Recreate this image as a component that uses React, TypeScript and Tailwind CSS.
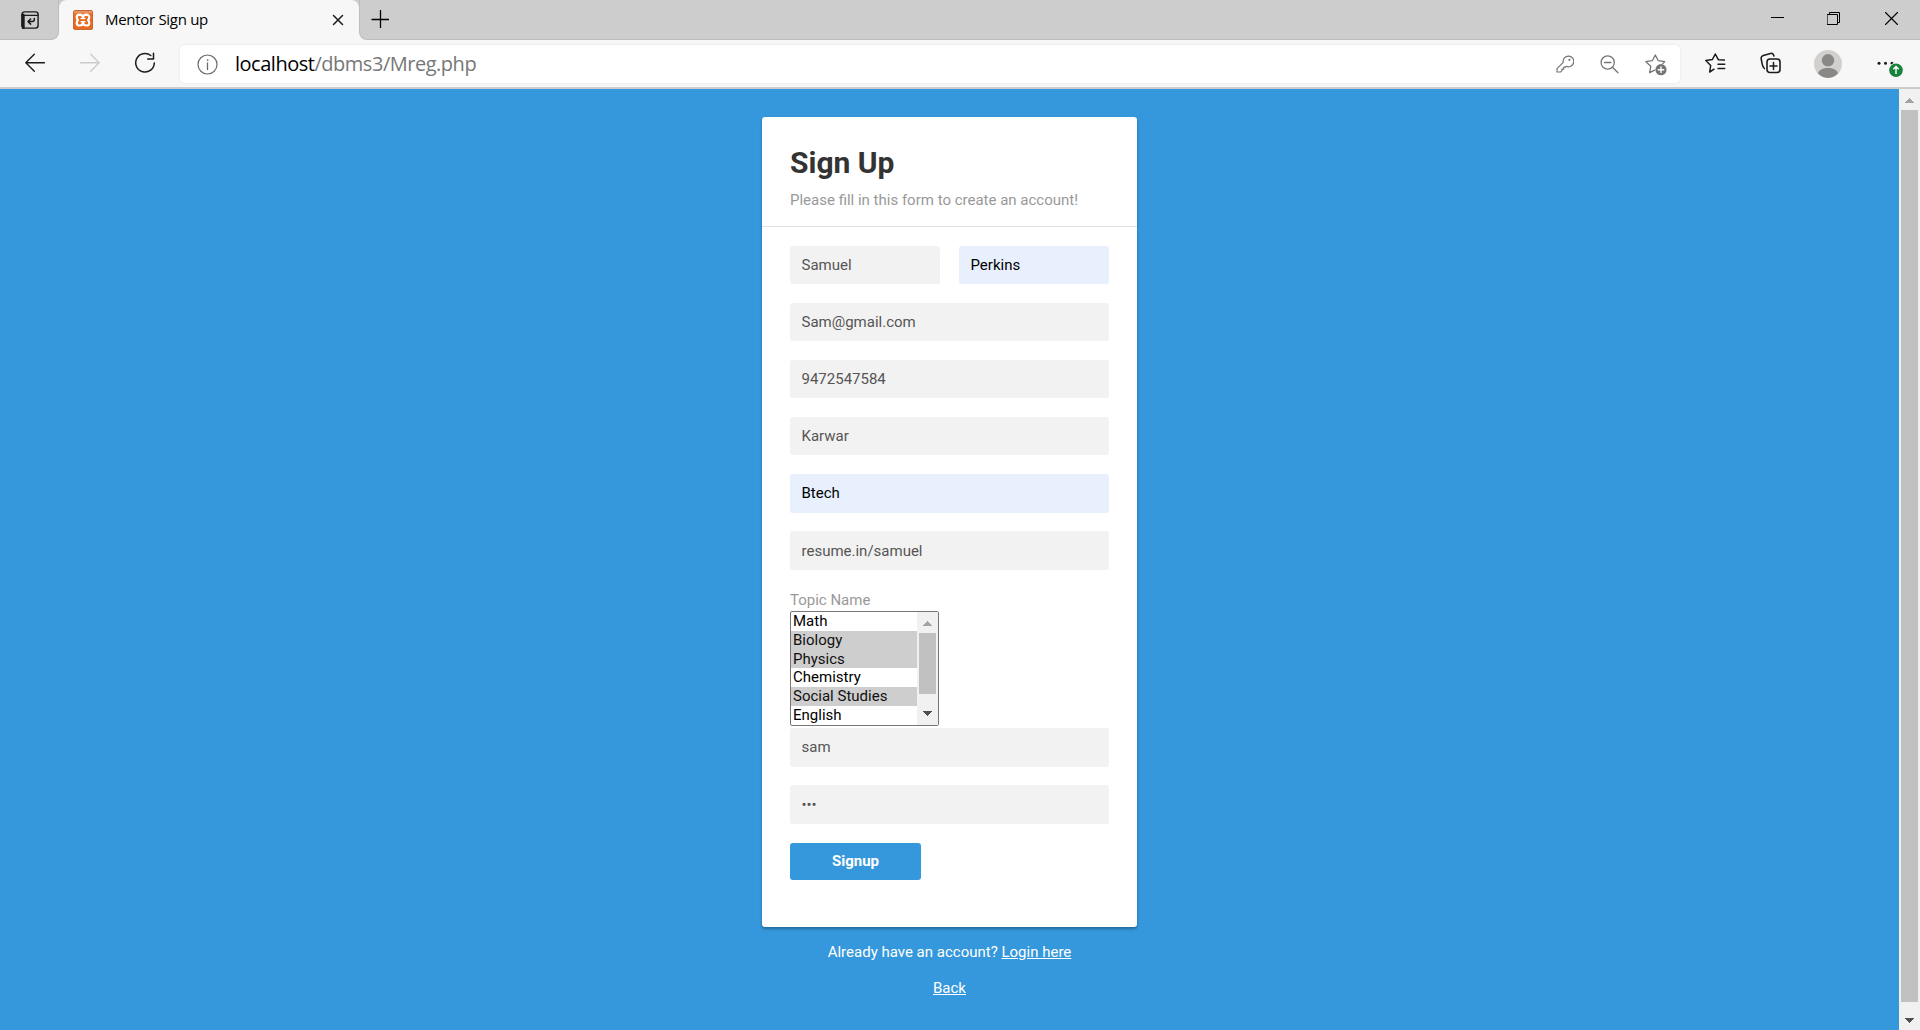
import type { ReactNode } from 'react';

function Icon({ size = 20, children, className = '' }: { size?: number; children: ReactNode; className?: string }) {
  return (
    <svg width={size} height={size} viewBox={`0 0 ${size} ${size}`} fill="none" stroke="currentColor" strokeWidth="1.3" strokeLinecap="round" strokeLinejoin="round" className={`block shrink-0 ${className}`}>
      {children}
    </svg>
  );
}

function TabStrip() {
  return (
    <div className="flex h-10 bg-[#f7f7f7]">
      <div className="w-[59px] rounded-br-lg border-b border-r border-[#bdbdbd] bg-[#cdcdcd] pl-[21px] pt-[11px]">
        <Icon size={18} className="text-[#1b1b1b]">
          <rect x="0.9" y="0.9" width="16.2" height="16.2" rx="2.5" strokeWidth="1.4" />
          <path d="M2.200 4v12.500" strokeWidth="3" />
          <path d="M1 4.300h16" strokeWidth="1.300" />
          <path d="M13.300 7.500v1c0 1.300-.8 2-2 2H7.200M9.600 8L7 10.500l2.600 2.600" strokeWidth="1.500" />
        </Icon>
      </div>
      <div className="w-[300px] bg-[#cdcdcd]">
        <div className="flex h-10 items-center rounded-t-lg bg-[#f7f7f7] pl-3.5 pr-[15px]">
          <svg width="20" height="20" viewBox="0 0 20 20" className="block shrink-0">
            <rect x="0.5" y="0.5" width="19" height="19" rx="1.5" fill="#e9691f" stroke="#c9663a" />
            <path d="M1 1h18v2.500H1z" fill="#e8935f" />
            <path d="M10 7.300C9.700 5.500 8.500 4.700 6.700 4.700C4.900 4.700 3.700 5.900 3.700 7.300C3.700 8.600 4.200 9.400 5 10.100C4.200 10.800 3.700 11.500 3.700 12.900C3.700 14.300 4.900 15.500 6.700 15.500C8.500 15.500 9.700 14.700 10 12.900C10.300 14.700 11.500 15.500 13.300 15.500C15.100 15.500 16.300 14.300 16.300 12.900C16.300 11.500 15.800 10.800 15 10.100C15.800 9.400 16.300 8.600 16.300 7.300C16.300 5.900 15.100 4.700 13.300 4.700C11.500 4.700 10.300 5.500 10 7.300z" fill="none" stroke="#fff" strokeWidth="2.200" strokeLinejoin="round" />
            <path d="M8.200 8.500h3.600M8.200 11.700h3.600" stroke="#fff" strokeWidth="1.600" strokeLinecap="round" />
          </svg>
          <span className="-mt-0.5 ml-3 flex-1 whitespace-nowrap font-['Open_Sans','Noto_Sans',sans-serif] text-[15px] leading-5 tracking-[-0.3px] text-black">Mentor Sign up</span>
          <Icon size={12} className="text-[#1b1b1b]">
            <path d="M1.500 1.500l9 9M10.500 1.500l-9 9" strokeWidth="1.500" />
          </Icon>
        </div>
      </div>
      <div className="flex flex-1 rounded-bl-lg border-b border-l border-[#bdbdbd] bg-[#cdcdcd] pl-3">
        <Icon size={18} className="-ml-px mt-[10px] text-black">
          <path d="M9.500 .5v17M1 9.500h17" strokeWidth="1.300" />
        </Icon>
        <div className="ml-auto flex pr-[22px] pt-3 text-black">
          <Icon size={13} className="mr-[43px]">
            <path d="M0 5.500h13" strokeWidth="1" strokeLinecap="butt" />
          </Icon>
          <Icon size={13} className="mr-[45px]">
            <path d="M.5 2.500h10v10H.5zM2.500 2.500v-2h10v10h-2" strokeWidth="1" strokeLinejoin="miter" />
          </Icon>
          <Icon size={13}>
            <path d="M.5 .5l12 12M12.500 .5l-12 12" strokeWidth="1.100" />
          </Icon>
        </div>
      </div>
    </div>
  );
}

function Toolbar() {
  return (
    <div className="flex h-[49px] items-start border-b-2 border-[#cbcbcb] bg-[#f7f7f7] text-[#1b1b1b]">
      <Icon className="ml-[25px] mt-[13px]">
        <path d="M19.500 9.700H.8M9.300 1.200L.8 9.700l8.500 8.500" strokeWidth="1.400" />
      </Icon>
      <Icon className="ml-[35px] mt-[13px] text-[#cbcbcb]">
        <path d="M.5 9.700h18.700M10.700 1.200l8.500 8.500-8.500 8.500" strokeWidth="1.400" />
      </Icon>
      <Icon size={22} className="ml-[34px] mt-[12px]">
        <path d="M16.800 3.500A9.300 9.300 0 1 0 20.300 11M19.500 1.200v5.800h-5.800" strokeWidth="1.500" />
      </Icon>
      <div className="ml-[24px] mt-[5px] flex h-[38px] w-[1500px] items-center rounded-[5px] bg-white pl-[17px] shadow-[0_0_3px_rgba(0,0,0,0.08)]">
        <Icon size={21} className="text-[#6b6b6b]">
          <circle cx="10.500" cy="10.500" r="9.500" strokeWidth="1.200" />
          <path d="M10.500 9v6.500" strokeWidth="1.300" />
          <circle cx="10.500" cy="6.100" r=".5" fill="currentColor" strokeWidth=".6" />
        </Icon>
        <div className="ml-[17px] flex-1 whitespace-nowrap font-['Open_Sans','Noto_Sans',sans-serif] text-[20px] leading-6 tracking-[-0.48px] text-[#777]">
          <span className="text-black">localhost</span>/dbms3/Mreg.php
        </div>
        <Icon size={18} className="mr-[26px] text-[#757575]">
          <path d="M7.200 7.300A5.300 5.300 0 1 1 10.300 11.300L9.300 12.200H7.700v1.900H5.900v1.600l-1.300 1.300H1v-3.300z" strokeWidth="1.200" />
          <circle cx="13.400" cy="4.800" r="1.100" fill="currentColor" stroke="none" />
        </Icon>
        <Icon size={19} className="mr-[26px] text-[#757575]">
          <circle cx="7.700" cy="7.500" r="6.600" />
          <path d="M12.400 12.200l5.600 5.600M4.500 7.500h6.400" />
        </Icon>
        <Icon size={22} className="mr-[13px] mt-px text-[#757575]">
          <path d="M9.500 16.200L4.700 18.700l1.100-6.500L.9 7.700l6.400-1L10.300 1l3 5.700 6.400.9-2 2" strokeWidth="1.300" />
          <circle cx="16" cy="15.700" r="5.600" fill="currentColor" stroke="none" />
          <path d="M13.300 15.700h5.400M16 13v5.400" stroke="#fff" strokeWidth="1.400" />
        </Icon>
      </div>
      <Icon size={21} className="ml-[25px] mt-[13px]">
        <path d="M9 16.200L4.700 19l1-6.500L.8 7.500l6.600-1L10.300 1l3 5.700 6 .4M13 11.200h6.700M13 15.500h6.700" strokeWidth="1.500" />
      </Icon>
      <Icon size={22} className="ml-[34px] mt-[12px]">
        <rect x="7" y="7" width="13" height="13.500" rx="3" strokeWidth="1.600" />
        <path d="M13.500 10.500v7M10 14h7M4.400 16.500C3 15.500 2.600 14 2.300 12.500L1.200 7C.8 5 1.500 4 3.300 3.500L10.500 1.500C12.500 1 13.500 2 13.900 4" strokeWidth="1.500" />
      </Icon>
      <svg width="28" height="28" viewBox="0 0 28 28" className="ml-[32px] mt-[10px] block shrink-0">
        <circle cx="14" cy="14" r="14" fill="#d2d0ce" />
        <circle cx="14" cy="10.300" r="6.200" fill="#8a8886" />
        <path d="M4 23.300C5.500 19.500 9 18 14 18s8.500 1.500 10 5.300A14 14 0 0 1 14 28 14 14 0 0 1 4 23.300z" fill="#8a8886" />
      </svg>
      <svg width="28" height="24" viewBox="0 0 28 24" className="ml-[34px] mt-[15px] block shrink-0">
        <g fill="#1b1b1b">
          <circle cx="3" cy="8.300" r="1.500" />
          <circle cx="9.500" cy="8.300" r="1.500" />
          <circle cx="16" cy="8.300" r="1.500" />
        </g>
        <circle cx="20" cy="15.300" r="7.500" fill="#f7f7f7" />
        <circle cx="20" cy="15.300" r="6.800" fill="#17823b" />
        <path d="M20 19v-7.200M17.300 14.200l2.700-2.700 2.700 2.700" fill="none" stroke="#fff" strokeWidth="1.400" />
      </svg>
    </div>
  );
}

function Arrow({ down = false, color }: { down?: boolean; color: string }) {
  return (
    <svg width="9" height="5" viewBox="0 0 9 5" shapeRendering="crispEdges" className="block shrink-0">
      <path d={down ? 'M0 0h9L4.500 5z' : 'M0 5h9L4.500 0z'} fill={color} />
    </svg>
  );
}

function Field({ value, filled = false, className = 'h-[38.3px]' }: { value: string; filled?: boolean; className?: string }) {
  return (
    <div className={`flex min-w-0 items-center rounded-[2.500px] px-[11.500px] ${filled ? 'bg-[#e8f0fe] text-black' : 'bg-[#f2f2f2] text-[#555]'} ${className}`}>
      <span>{value}</span>
    </div>
  );
}

const topics = [
  { name: 'Math', selected: false },
  { name: 'Biology', selected: true },
  { name: 'Physics', selected: true },
  { name: 'Chemistry', selected: false },
  { name: 'Social Studies', selected: true },
  { name: 'English', selected: false },
];

function TopicList() {
  return (
    <div className="flex h-[115px] w-[149px] rounded-[2px] border border-[#767676] bg-white">
      <div className="flex flex-1 flex-col pt-[0.1px] text-black">
        {topics.map((t) => (
          <div key={t.name} className={`h-[18.750px] pl-[2px] leading-[18px] ${t.selected ? 'bg-[#cecece] text-[#101010]' : ''}`}>
            {t.name}
          </div>
        ))}
      </div>
      <div className="flex w-[21px] flex-col items-center bg-[#f1f1f1] pb-[9px] pt-[9px]">
        <Arrow color="#a3a3a3" />
        <div className="mt-[7px] h-[61px] w-[17px] bg-[#c1c1c1]" />
        <div className="mt-auto">
          <Arrow down color="#505050" />
        </div>
      </div>
    </div>
  );
}

function SignUpCard() {
  return (
    <div className="h-[810px] w-[375px] rounded-[3px] bg-white shadow-[0_2px_3px_rgba(0,0,0,0.3)]">
      <div className="h-[110px] border-b border-[#e1e1e1] px-7 pt-7">
        <h1 className="text-[30px] font-bold leading-9 text-[#333]">Sign Up</h1>
        <p className="mt-[9px] whitespace-nowrap leading-5 text-[#999]">Please fill in this form to create an account!</p>
      </div>
      <div className="px-7 pt-[19px]">
        <div className="flex h-[324px] flex-col gap-[18.780px]">
          <div className="flex gap-[19px]">
            <Field value="Samuel" className="h-[38.3px] flex-1" />
            <Field value="Perkins" filled className="h-[38.3px] flex-1" />
          </div>
          <Field value="Sam@gmail.com" />
          <Field value="9472547584" />
          <Field value="Karwar" />
          <Field value="Btech" filled />
          <Field value="resume.in/samuel" className="h-[38.3px] pt-px" />
        </div>
        <div className="pb-px pt-5 leading-5 text-[#999]">Topic Name</div>
        <TopicList />
        <div className="mt-[2px] flex flex-col gap-[18px]">
          <Field value="sam" className="h-[39px] pb-px" />
          <Field value="•••" className="h-[39px] pt-px" />
        </div>
        <button className="mt-[19px] block h-[37px] w-[131px] rounded-[3px] bg-[#3598dc] pb-px font-bold text-white">Signup</button>
      </div>
    </div>
  );
}

export default function App() {
  return (
    <div className="flex h-[1030px] w-[1920px] flex-col overflow-hidden">
      <TabStrip />
      <Toolbar />
      <div className="flex min-h-0 flex-1">
        <main className="flex flex-1 flex-col items-center bg-[#3598dc] pt-7 font-[Roboto,sans-serif] text-[15px] leading-5">
          <SignUpCard />
          <p className="mt-[15px] text-white">
            Already have an account? <a className="underline">Login here</a>
          </p>
          <a className="mt-4 text-white underline">Back</a>
        </main>
        <div className="flex w-[21px] flex-col items-center bg-[#f1f1f1] pb-[7px] pt-[9px]">
          <Arrow color="#a3a3a3" />
          <div className="mt-[7px] h-[892px] w-[17px] bg-[#c1c1c1]" />
          <div className="mt-auto">
            <Arrow down color="#505050" />
          </div>
        </div>
      </div>
    </div>
  );
}
